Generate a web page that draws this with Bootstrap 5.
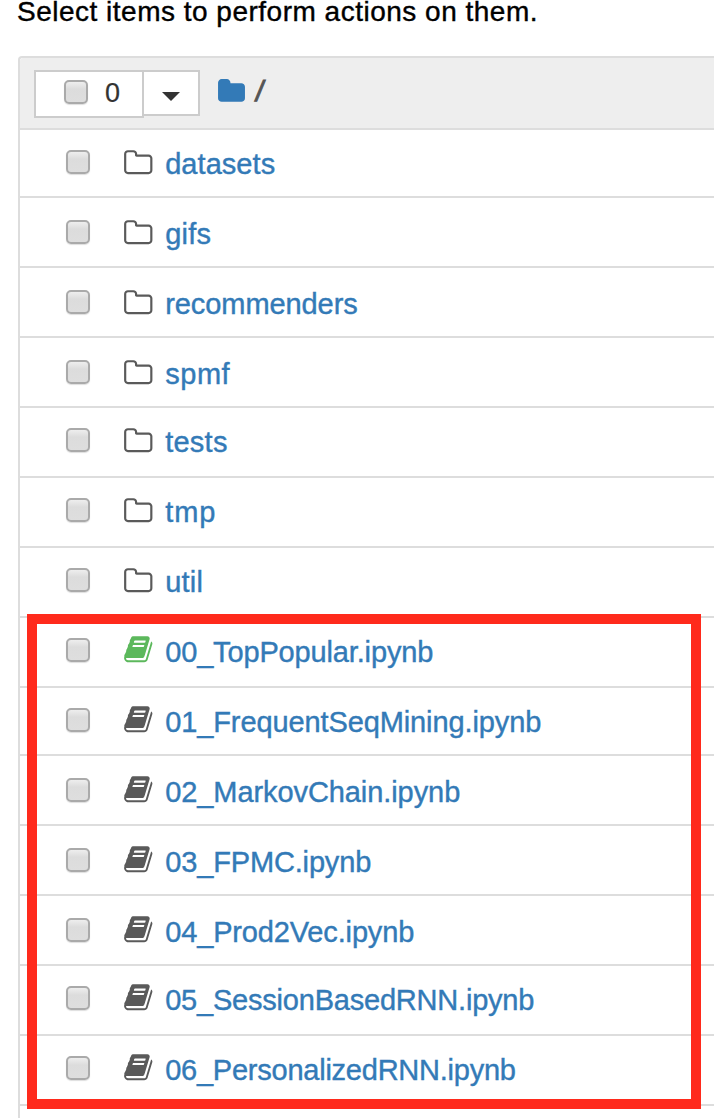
<!DOCTYPE html>
<html lang="en">
<head>
<meta charset="utf-8">
<title>Files</title>
<link rel="stylesheet" href="https://cdn.jsdelivr.net/npm/bootstrap@5.3.0/dist/css/bootstrap.min.css">
<style>
body{font-family:"Liberation Sans",Arial,sans-serif;font-size:29px;line-height:28px;color:#000;background:#fff;height:1118px;overflow:hidden;-webkit-text-stroke:.4px}
.fit{white-space:nowrap;display:block}
.intro{margin-left:17px;height:56px;line-height:24px;font-size:28px}
.intro .fit{width:max-content}
.browser{margin-left:18px;border:solid #ddd;border-width:2px 0 0 2px;border-top-left-radius:4px;height:1062px}
.toolbar{height:72px;background:#eee;border-bottom:2px solid #ddd;padding:12px 0 0 14px;border-top-left-radius:3px}
.btn-tool{background:#fff;border:2px solid #ccc;border-radius:0;color:#333;padding:0}
.sel{width:110px;height:48px;padding:8px 0 0 28px;font-size:27px}
.count{margin:-1px 0 0 17px;-webkit-text-stroke:.2px}
.drop{width:58px;height:46px;margin-left:-2px}
.drop svg{display:block;margin:7px 0 0 18px}
.tick{appearance:none;display:block;flex:none;width:24px;height:24px;margin:0;border:2px solid #aaa;border-radius:5px;background:linear-gradient(#eee,#dcdcdc 35%,#dedede);box-shadow:0 1px 1px #0002}
.entry{height:70px;border-bottom:2px solid #ddd;padding:20px 0 0 46px}
.entry.low{padding-top:22px}
.entry.short{height:68px}
.glyph{width:30.5px;height:30.5px;flex:none;margin:-2.3px 0 0 32.8px;fill:#5a5a5a}
.book{margin-top:-4px}
.running{fill:#5cb85c}
.entry a{color:#337ab7;margin-left:11.9px;text-decoration:none}
.crumb{width:29px;height:29px;fill:#337ab7;margin:7px 0 0 17px}
.slash{color:#555;margin:7px 0 0 10px;font-size:29px;transform:skewX(-8deg);-webkit-text-stroke:1px}
.frame{left:27px;top:614px;width:674px;height:495px;border:10px solid #ff2a1c;pointer-events:none}
</style>
</head>
<body class="position-relative">
<svg class="d-none">
<symbol id="folder-o" viewBox="0 0 1792 1792"><path d="M1600 1312v-704q0-40-28-68t-68-28h-704q-40 0-68-28t-28-68v-64q0-40-28-68t-68-28h-320q-40 0-68 28t-28 68v960q0 40 28 68t68 28h1216q40 0 68-28t28-68zm128-704v704q0 92-66 158t-158 66h-1216q-92 0-158-66t-66-158v-960q0-92 66-158t158-66h320q92 0 158 66t66 158v32h672q92 0 158 66t66 158z"/></symbol>
<symbol id="folder" viewBox="0 0 1792 1792"><path d="M1728 608v704q0 92-66 158t-158 66h-1216q-92 0-158-66t-66-158v-960q0-92 66-158t158-66h320q92 0 158 66t66 158v32h672q92 0 158 66t66 158z"/></symbol>
<symbol id="book" viewBox="0 0 1792 1792"><path d="M1703 478q40 57 18 129l-275 906q-19 64-76.500 107.500t-122.500 43.500h-923q-77 0-148.500-53.500t-99.500-131.500q-24-67-2-127 0-4 3-27t4-37q1-8-3-21.500t-3-19.500q2-11 8-21t16.500-23.500 16.500-23.500q23-38 45-91.500t30-91.500q3-10 .5-30t-.5-28q3-11 17-28t17-23q21-36 42-92t25-90q1-9-2.500-32t.5-28q4-13 22-30.500t22-22.500q19-26 42.500-84.500t27.500-96.500q1-8-3-25.500t-2-26.500q2-8 9-18t18-23 17-21q8-12 16.500-30.500t15-35 16-36 19.500-32 26.500-23.500 36-11.500 47.500 5.500l-1 3q38-9 51-9h761q74 0 114 56t18 130l-274 906q-36 119-71.500 153.500t-128.500 34.500h-869q-27 0-38 15-11 16-1 43 24 70 144 70h923q29 0 56-15.500t35-41.500l300-987q7-22 5-57 38 15 59 43zm-1064 2q-4 13 2 22.500t20 9.500h608q13 0 25.500-9.500t16.500-22.500l21-64q4-13-2-22.500t-20-9.500h-608q-13 0-25.500 9.500t-16.500 22.500zm-83 256q-4 13 2 22.500t20 9.500h608q13 0 25.500-9.500t16.500-22.500l21-64q4-13-2-22.500t-20-9.500h-608q-13 0-25.500 9.500t-16.500 22.500z"/></symbol>
</svg>
<div class="intro"><span class="fit" data-w="521">Select items to perform actions on them.</span></div>
<main class="browser">
  <div class="toolbar d-flex align-items-start">
    <div class="btn-tool sel d-flex"><input type="checkbox" class="tick" aria-label="Select all"><span class="count">0</span></div>
    <button class="btn-tool drop" aria-label="Select menu"><svg width="18" height="9" viewBox="0 0 18 9"><path d="M0 0h18L9 9z" fill="#333"/></svg></button>
    <svg class="crumb"><use href="#folder"/></svg><span class="slash">/</span>
  </div>
  <div id="entries"></div>
</main>
<div class="frame position-absolute"></div>
<script src="https://cdn.jsdelivr.net/npm/bootstrap@5.3.0/dist/js/bootstrap.bundle.min.js"></script>
<script>
// name, label width, row modifiers
const entries=[
["datasets",110,"short"],["gifs",46,"low"],["recommenders",192.5,"low"],["spmf",65,"low"],
["tests",62.5,""],["tmp",51,""],["util",38,""],
["00_TopPopular.ipynb",268,""],["01_FrequentSeqMining.ipynb",376,"short"],
["02_MarkovChain.ipynb",295,"low"],["03_FPMC.ipynb",206,"low"],["04_Prod2Vec.ipynb",249,"low"],
["05_SessionBasedRNN.ipynb",369,""],["06_PersonalizedRNN.ipynb",350.5,""]];
document.getElementById("entries").innerHTML=entries.map(([name,w,mod],i)=>{
  const nb=name.endsWith(".ipynb");
  return `<div class="entry d-flex align-items-start ${mod}"><input type="checkbox" class="tick" aria-label="${name}"><svg class="glyph ${nb?"book":""} ${i===7?"running":""}"><use href="#${nb?"book":"folder-o"}"/></svg><a href="#" class="fit" data-w="${w}">${name}</a></div>`;
}).join("");
document.querySelectorAll(".fit").forEach(e=>{
  e.style.letterSpacing=(e.dataset.w-e.getBoundingClientRect().width)/e.textContent.length+"px";
});
</script>
</body>
</html>
